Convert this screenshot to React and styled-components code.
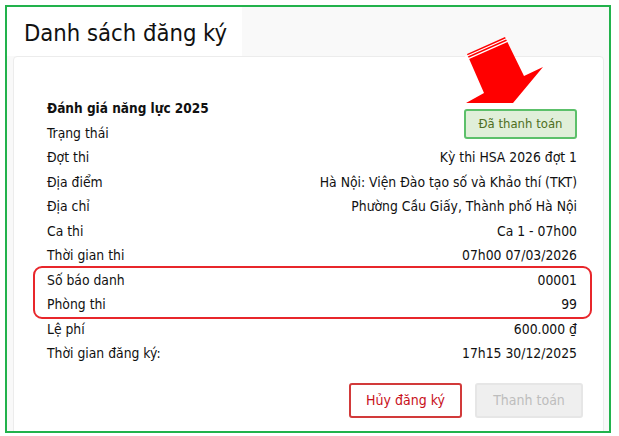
import React from 'react';
import styled, { createGlobalStyle } from 'styled-components';

const GlobalStyle = createGlobalStyle`
	html, body {
		margin: 0;
		padding: 0;
		background: #ffffff;
	}
	body {
		font-family: "DejaVu Sans Condensed", "DejaVu Sans", sans-serif;
		color: #111;
	}
`;

const Frame = styled.div`
	position: relative;
	width: 602px;
	height: 424px;
	margin: 5px 0 0 5px;
	border: 2px solid #22b24c;
	background: #f9f9f9;
	display: flex;
	flex-direction: column;
	overflow: hidden;
`;

const Header = styled.div`
	height: 49px;
	display: flex;
`;

const PageTitle = styled.h1`
	margin: 0;
	width: 218px;
	padding-left: 17px;
	background: #fff;
	font-weight: normal;
	font-size: 23.6px;
	line-height: 52px;
	color: #111;
	white-space: nowrap;
`;

const Card = styled.div`
	flex: 1;
	margin: 0 5px -6px 6px;
	padding: 39px 26px 0 33px;
	background: #fff;
	border: 1px solid #ececec;
	border-radius: 4px;
	font-size: 13.8px;
`;

const ExamName = styled.div`
	font-weight: bold;
	font-size: 13.5px;
	line-height: 24.5px;
`;

const Row = styled.div`
	display: flex;
	justify-content: space-between;
	align-items: flex-start;
	line-height: 24.5px;
	white-space: nowrap;
`;

const Value = styled.span`
	text-align: right;
`;

const Highlight = styled.div`
	margin: -2px -15px -2px -14px;
	padding: 0 13px 0 12px;
	border: 2px solid #e8262b;
	border-radius: 9px;
`;

const StatusBadge = styled.div`
	width: 109px;
	height: 26px;
	margin: -12px 0 6px;
	border: 2px solid #5cc06a;
	border-radius: 3px;
	background: #e0efd9;
	color: #4e6e22;
	font-size: 13px;
	line-height: 26px;
	text-align: center;
`;

const Actions = styled.div`
	display: flex;
	justify-content: flex-end;
	gap: 13px;
	margin: 17px -6px 0 0;
`;

const Button = styled.button`
	height: 35px;
	padding: 0;
	border-radius: 3px;
	font-family: inherit;
	font-size: 14px;
	cursor: pointer;
	width: ${(p) => p.$w}px;
	border: ${(p) => (p.$danger ? '2px solid #d23a3a' : '2px solid #e6e6e6')};
	background: ${(p) => (p.$danger ? '#fff' : '#efefef')};
	color: ${(p) => (p.$danger ? '#c8101a' : '#bdbdbd')};
`;

const Arrow = styled.svg`
	position: absolute;
	left: 453px;
	top: 28px;
	pointer-events: none;
`;

const rows = [
	['Đợt thi', 'Kỳ thi HSA 2026 đợt 1'],
	['Địa điểm', 'Hà Nội: Viện Đào tạo số và Khảo thí (TKT)'],
	['Địa chỉ', 'Phường Cầu Giấy, Thành phố Hà Nội'],
	['Ca thi', 'Ca 1 - 07h00'],
	['Thời gian thi', '07h00 07/03/2026'],
];

const marked = [
	['Số báo danh', '00001'],
	['Phòng thi', '99'],
];

const tail = [
	['Lệ phí', '600.000 ₫'],
	['Thời gian đăng ký:', '17h15 30/12/2025'],
];

const renderRows = (list) =>
	list.map(([label, value]) => (
		<Row key={label}>
			<span>{label}</span>
			<Value>{value}</Value>
		</Row>
	));

// arrow points are page coords shifted by (460, 35)
const App = () => {
	return (
		<>
			<GlobalStyle />
			<Frame>
				<Header>
					<PageTitle>Danh sách đăng ký</PageTitle>
				</Header>
				<Card>
					<ExamName>Đánh giá năng lực 2025</ExamName>
					<Row>
						<span>Trạng thái</span>
						<StatusBadge>Đã thanh toán</StatusBadge>
					</Row>
					{renderRows(rows)}
					<Highlight>{renderRows(marked)}</Highlight>
					{renderRows(tail)}
					<Actions>
						<Button $danger $w={113}>
							Hủy đăng ký
						</Button>
						<Button $w={108} disabled>
							Thanh toán
						</Button>
					</Actions>
				</Card>
				<Arrow width="90" height="75" viewBox="0 0 90 75">
					<polygon
						points="7,19 45,2 64,41 83,32 53,68 6,68 24,58"
						fill="#ff0000"
					/>
					<line x1="5" y1="22" x2="48" y2="3" stroke="#fff" strokeWidth="1.3" />
					<line x1="6" y1="24.6" x2="49" y2="5.6" stroke="#fff" strokeWidth="1.3" />
				</Arrow>
			</Frame>
		</>
	);
};

export default App;
